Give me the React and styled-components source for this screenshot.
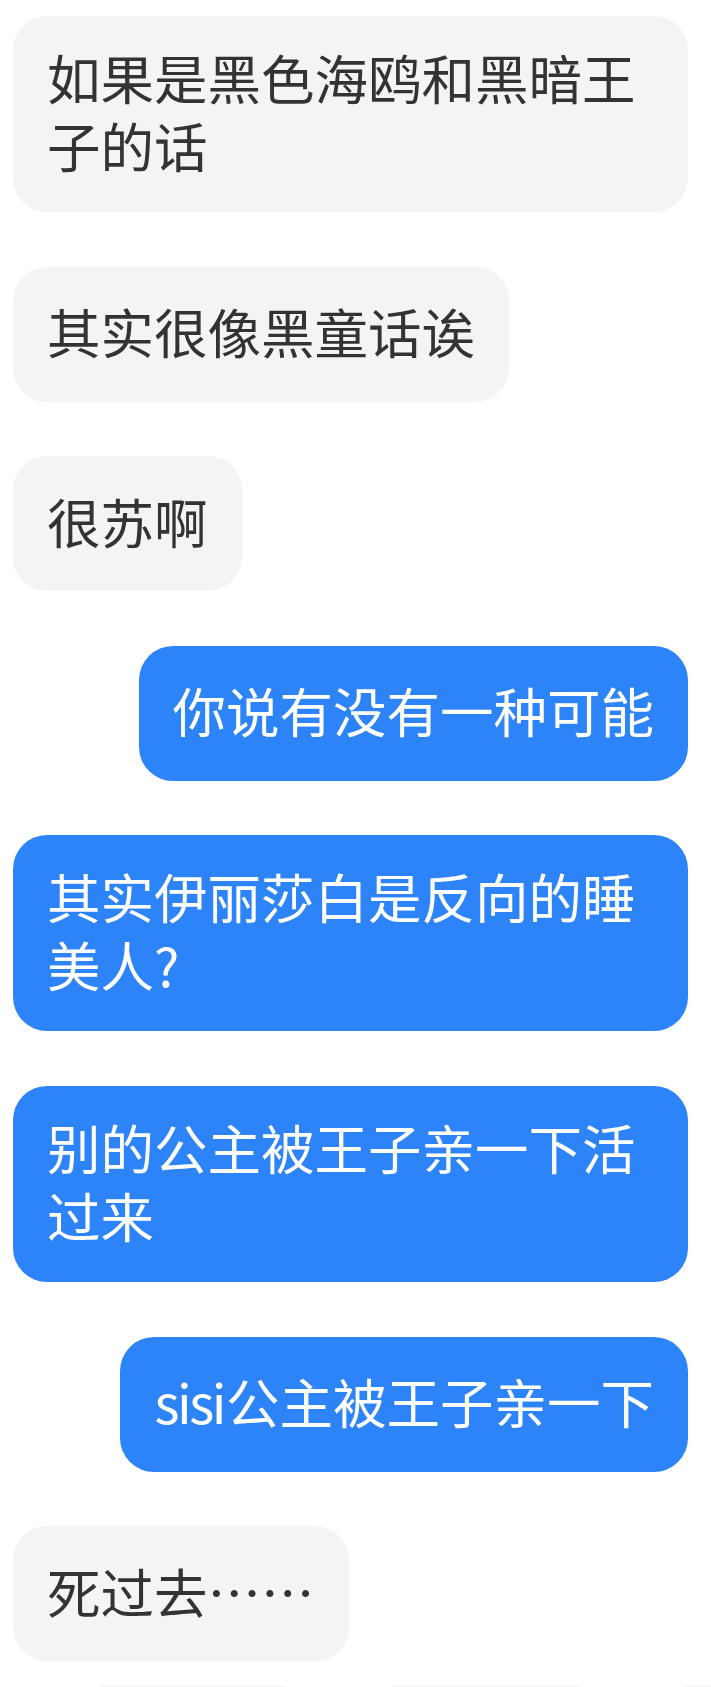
import React from 'react';
import styled, { createGlobalStyle } from 'styled-components';

const GlobalStyle = createGlobalStyle`
  html, body {
    margin: 0;
    padding: 0;
    background: #ffffff;
  }
  body {
    font-family: "Noto Sans CJK SC", "Noto Sans", sans-serif;
    -webkit-font-smoothing: antialiased;
  }
`;

const Thread = styled.div`
  display: flex;
  flex-direction: column;
  gap: 54.6px;
  padding: 16px 23px 0 13px;
`;

const Bubble = styled.div`
  box-sizing: border-box;
  display: flex;
  align-items: center;
  max-width: 675px;
  min-height: 135px;
  padding: 27px 34px 33px;
  border-radius: 34px;
  font-size: 53.5px;
  line-height: 68px;
  word-break: break-all;
  align-self: ${p => (p.$mine ? 'flex-end' : 'flex-start')};
  background: ${p => (p.$mine ? '#2d84f8' : '#f4f4f4')};
  color: ${p => (p.$mine ? '#ffffff' : '#333333')};
`;

// latin runs sit a little tighter than the CJK glyphs around them
const Latin = styled.span`
  letter-spacing: -2.5px;
  margin-right: 2px;
`;

const QuickBar = styled.div`
  display: flex;
  gap: 64px;
  margin-top: 24px;
  margin-left: -215px;
  overflow: hidden;
`;

const QuickPill = styled.div`
  flex: 0 0 229px;
  height: 60px;
  border-radius: 30px;
  background: #f6f6f6;
`;

const messages = [
  { mine: false, text: '如果是黑色海鸥和黑暗王子的话' },
  { mine: false, text: '其实很像黑童话诶' },
  { mine: false, text: '很苏啊' },
  { mine: true, text: '你说有没有一种可能' },
  { mine: true, text: '其实伊丽莎白是反向的睡美人?' },
  { mine: true, text: '别的公主被王子亲一下活过来' },
  { mine: true, latin: 'sisi', text: '公主被王子亲一下' },
  { mine: false, text: '死过去……' },
];

export default function App() {
  return (
    <>
      <GlobalStyle />
      <Thread>
        {messages.map((m, i) => (
          <Bubble key={i} $mine={m.mine}>
            <span>
              {m.latin && <Latin>{m.latin}</Latin>}
              {m.text}
            </span>
          </Bubble>
        ))}
      </Thread>
      <QuickBar>
        <QuickPill />
        <QuickPill />
        <QuickPill />
        <QuickPill />
      </QuickBar>
    </>
  );
}
